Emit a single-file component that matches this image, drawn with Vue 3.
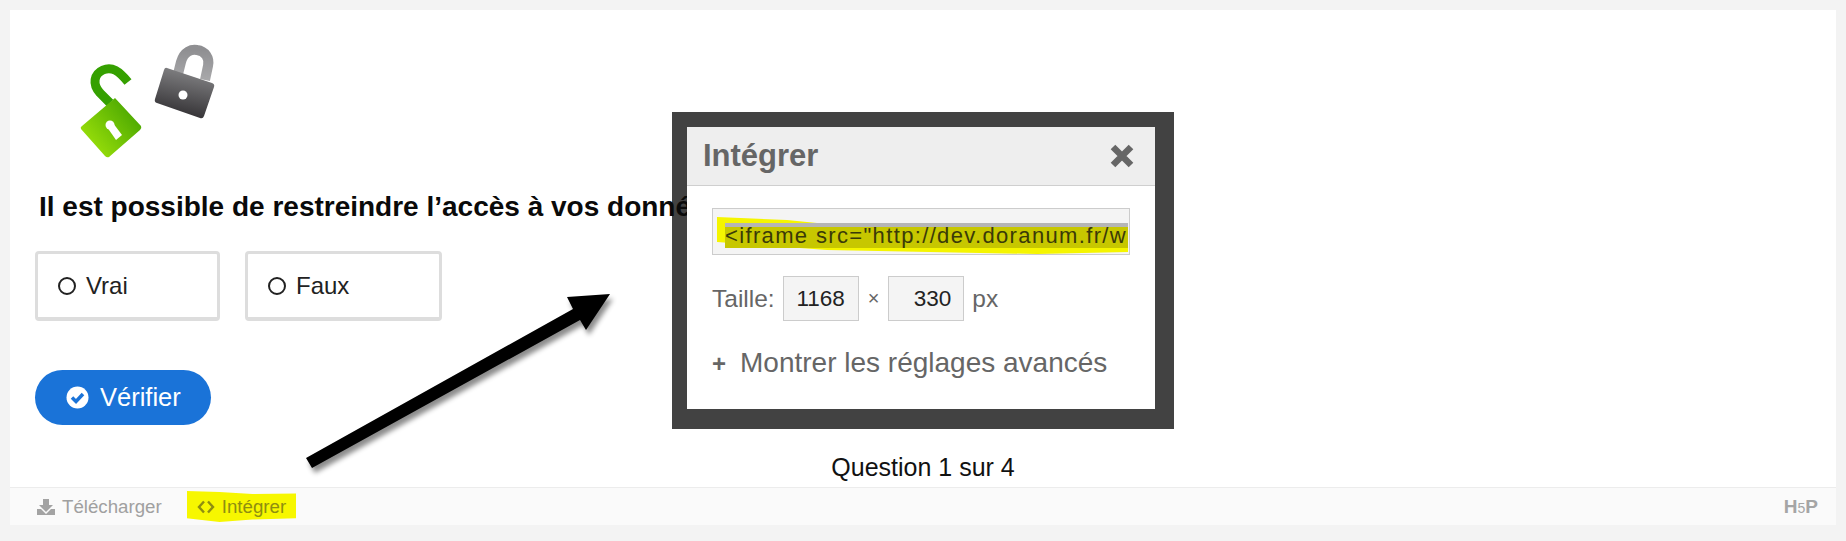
<template>
  <div class="page">
    <div class="card">
      <div class="main">
        <svg class="locks" width="200" height="140" viewBox="35 30 200 140">
          <defs>
            <linearGradient id="grayShackle" x1="0" y1="0" x2="0" y2="1">
              <stop offset="0" stop-color="#8f8f92" />
              <stop offset="1" stop-color="#a8a8aa" />
            </linearGradient>
            <linearGradient id="grayBody" x1="0.62" y1="0" x2="0.38" y2="1">
              <stop offset="0" stop-color="#858587" />
              <stop offset="1" stop-color="#2f2d30" />
            </linearGradient>
            <linearGradient id="greenBody" x1="1" y1="0.1" x2="0" y2="0.9">
              <stop offset="0" stop-color="#3f9f00" />
              <stop offset="1" stop-color="#a6e80b" />
            </linearGradient>
          </defs>
          <g class="soft">
            <path d="M178 74 L181 62 C184 51 192 49 197 50 C205 51 210 58 208 66 L205 80" fill="none" stroke="url(#grayShackle)" stroke-width="10" />
            <path d="M167 68 L212 83 Q215 84 214 87 L204 116 Q203 119 200 118 L157 103 Q154 102 155 99 L164 70 Q165 67 167 68 Z" fill="url(#grayBody)" />
            <circle cx="183" cy="95" r="4.500" fill="#fff" />
            <path d="M110 103 L100 93 C92 84 94 74 103 70 C112 66 119 71 128 82" fill="none" stroke="#35a000" stroke-width="9" />
            <path d="M115 98 L141 126 Q142 128 140 130 L109 157 Q107 158 105 156 L81 129 Q80 127 82 126 Z" fill="url(#greenBody)" />
            <circle cx="110" cy="125" r="4.500" fill="#fff" />
            <path d="M107 127 L113 123 L122 135 L116 140 Z" fill="#fff" />
          </g>
        </svg>
        <h2 class="question">Il est possible de restreindre l’accès à vos données</h2>
        <div class="options">
          <div v-for="opt in options" :key="opt.label" class="option" :class="opt.cls">
            <span class="radio"></span>{{ opt.label }}
          </div>
        </div>
        <button type="button" class="check">
          <svg width="23" height="23" viewBox="0 0 23 23">
            <circle cx="11.500" cy="11.500" r="11" fill="#fff" />
            <path d="M6 11.500 L10 15.500 L17 8" fill="none" stroke="#1a73d8" stroke-width="3.500" />
          </svg>
          Vérifier
        </button>
        <div class="progress">Question 1 sur 4</div>

        <svg class="arrow" width="330" height="200" viewBox="295 285 330 200">
          <defs>
            <filter id="arrowShadow" x="-10%" y="-10%" width="125%" height="125%">
              <feDropShadow dx="3" dy="5" stdDeviation="2.500" flood-color="#000" flood-opacity="0.45" />
            </filter>
          </defs>
          <polygon points="306,458 573,309 567,297 610,294 586,330 580,320 312,468" fill="#000" filter="url(#arrowShadow)" />
        </svg>

        <div class="dialog-frame">
          <div class="dialog">
            <div class="dialog-head">
              <span>Intégrer</span>
              <svg width="26" height="26" viewBox="0 0 26 26">
                <path d="M4 4 L22 22 M22 4 L4 22" stroke="#666" stroke-width="6.500" />
              </svg>
            </div>
            <div class="dialog-body">
              <div class="code-box">
                <svg class="marker" width="418" height="47" viewBox="0 0 418 47">
                  <polygon points="5,9 75,12 125,17 416,20 416,44 325,46 115,42 5,34" fill="#f5f500" />
                </svg>
                <div class="code"><span>&lt;iframe src="http://dev.doranum.fr/wp</span></div>
              </div>
              <div class="size-row">
                <span>Taille:</span>
                <input class="size" value="1168" readonly />
                <span class="times">×</span>
                <input class="size right" value="330" readonly />
                <span>px</span>
              </div>
              <div class="advanced"><span class="plus">+</span>Montrer les réglages avancés</div>
            </div>
          </div>
        </div>
      </div>
      <div class="footer">
        <span class="action">
          <svg width="18" height="16" viewBox="0 0 18 16">
            <path d="M6 0 H12 V6 H16 L9 13 L2 6 H6 Z" fill="#a3a3a3" />
            <path d="M0 10 H4 L9 15 L14 10 H18 V16 H0 Z" fill="#a3a3a3" />
          </svg>
          Télécharger
        </span>
        <span class="action marked">
          <svg width="18" height="14" viewBox="0 0 18 14">
            <path d="M7 1.500 L2 7 L7 12.500 M11 1.500 L16 7 L11 12.500" fill="none" stroke="#8e8e10" stroke-width="2.400" />
          </svg>
          Intégrer
        </span>
        <span class="logo">H<small>5</small>P</span>
      </div>
    </div>
  </div>
</template>

<script setup>
const options = [
  { label: 'Vrai', cls: 'first' },
  { label: 'Faux', cls: 'second' }
]
</script>

<style>
html, body {
  background: #f3f3f3;
}
</style>

<style scoped>
.page {
  box-sizing: border-box;
  height: 541px;
  padding: 10px 10px 16px;
  font-family: "Liberation Sans", Arial, sans-serif;
}

.card {
  height: 100%;
  display: flex;
  flex-direction: column;
  background: #fff;
}

.main {
  position: relative;
  flex: 1;
  display: flex;
  flex-direction: column;
  align-items: flex-start;
  padding: 20px 25px 6px;
}

.locks {
  display: block;
}

.soft {
  filter: blur(0.7px);
}

/* the heading runs over the dark frame but under the white dialog */
.question {
  position: relative;
  z-index: 1;
  margin: 22px 0 0 4px;
  font-size: 28px;
  line-height: 30px;
  font-weight: 700;
  color: #0a0a0a;
  white-space: nowrap;
}

.options {
  display: flex;
  gap: 25px;
  margin-top: 29px;
}

.option {
  box-sizing: border-box;
  height: 70px;
  display: flex;
  align-items: center;
  gap: 10px;
  padding-left: 20px;
  border: 3px solid #dddddd;
  border-bottom-width: 4px;
  border-radius: 4px;
  font-size: 24px;
  color: #222;
}

.first {
  width: 185px;
}

.second {
  width: 197px;
}

.radio {
  box-sizing: border-box;
  width: 18px;
  height: 18px;
  border: 2px solid #222;
  border-radius: 50%;
}

.check {
  display: flex;
  align-items: center;
  gap: 11px;
  width: 176px;
  height: 55px;
  margin-top: 49px;
  padding: 0 0 0 31px;
  border: 0;
  border-radius: 28px;
  background: #1a73d8;
  color: #fff;
  font-family: inherit;
  font-size: 25.500px;
}

.progress {
  align-self: center;
  margin-top: auto;
  font-size: 25px;
  line-height: 28px;
  color: #111;
}

.arrow {
  position: absolute;
  left: 285px;
  top: 275px;
}

.dialog-frame {
  position: absolute;
  left: 662px;
  top: 102px;
  width: 502px;
  height: 317px;
  box-sizing: border-box;
  padding: 15px 19px 20px 15px;
  background: #424242;
}

.dialog {
  position: relative;
  z-index: 2;
  height: 100%;
  background: #fff;
}

.dialog-head {
  box-sizing: border-box;
  height: 59px;
  display: flex;
  align-items: center;
  justify-content: space-between;
  padding: 0 20px 0 16px;
  background: #eeeeee;
  border-bottom: 1px solid #cfcfcf;
  font-size: 31px;
  font-weight: 700;
  color: #666;
}

.dialog-body {
  padding: 22px 25px 0;
}

.code-box {
  position: relative;
  box-sizing: border-box;
  width: 418px;
  height: 47px;
  background: #f4f4f4;
  border: 1px solid #cccccc;
}

.marker {
  position: absolute;
  left: -1px;
  top: -1px;
}

.code {
  position: absolute;
  left: 12px;
  top: 14px;
  width: 403px;
  height: 25px;
  overflow: hidden;
  font-size: 22px;
  line-height: 25px;
  letter-spacing: 1.350px;
  white-space: nowrap;
  color: #3a3a08;
}

.code span {
  display: block;
  background: linear-gradient(#b5b5b5 0 4px, #c7c700 4px 100%);
}

.size-row {
  display: flex;
  align-items: center;
  gap: 8px;
  margin-top: 21px;
  font-size: 24.500px;
  color: #666;
}

.size {
  box-sizing: border-box;
  width: 76px;
  height: 45px;
  padding: 0 12px;
  background: #f4f4f4;
  border: 1px solid #cccccc;
  font-family: inherit;
  font-size: 22.500px;
  color: #222;
  text-align: center;
  outline: none;
}

.size.right {
  text-align: right;
}

.times {
  margin: 0 1px;
  font-size: 20px;
}

.advanced {
  margin-top: 26px;
  font-size: 28px;
  line-height: 32px;
  color: #666;
}

.plus {
  display: inline-block;
  width: 28px;
  font-weight: 700;
  font-size: 24px;
}

.footer {
  box-sizing: border-box;
  height: 38px;
  display: flex;
  align-items: center;
  gap: 25px;
  padding: 0 18px 0 27px;
  background: #fafafa;
  border-top: 1px solid #ececec;
  font-size: 18.700px;
  color: #a0a0a0;
}

.action {
  display: flex;
  align-items: center;
  gap: 7px;
}

.marked {
  height: 31px;
  padding: 0 10px;
  background: #f7f700;
  color: #8e8e10;
  clip-path: polygon(0 0, 30% 3%, 60% 10%, 100% 8%, 100% 88%, 60% 92%, 30% 100%, 0 88%);
}

.logo {
  margin-left: auto;
  font-size: 19px;
  font-weight: 700;
  color: #a5a5a5;
}

.logo small {
  font-size: 14px;
  font-weight: 400;
}
</style>
